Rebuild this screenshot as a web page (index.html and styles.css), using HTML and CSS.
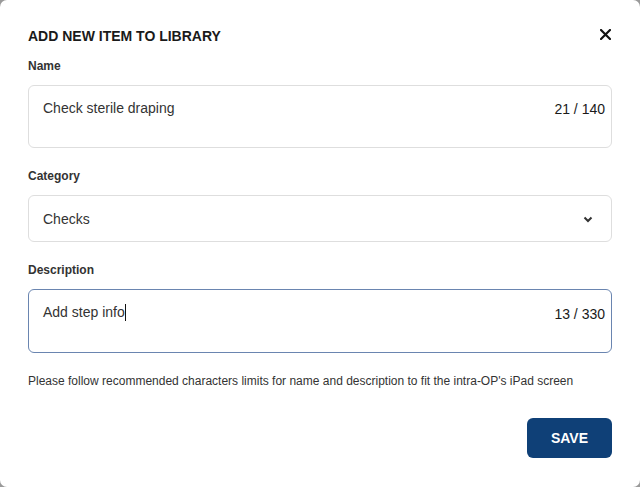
FILE: index.html
```html
<html lang="en">

<head>
    <meta charset="UTF-8">
    <meta name="viewport" content="width=device-width, initial-scale=1.0">
    <title>Add New Item To Library</title>
    <link rel="stylesheet" href="styles.css">
</head>

<body>
    <div class="modal">
        <div class="modal-header">
            <h1>ADD NEW ITEM TO LIBRARY</h1>
            <button class="close-btn" title="Close">
                <svg width="11" height="11" viewBox="0 0 11 11">
                    <path d="M1 1 L10 10 M10 1 L1 10" stroke="#111" stroke-width="2.2" stroke-linecap="round" />
                </svg>
            </button>
        </div>

        <!-- Name -->
        <div class="field">
            <label>Name</label>
            <div class="text-box name-box">
                <span class="value">Check sterile draping</span>
                <span class="counter">21 / 140</span>
            </div>
        </div>

        <!-- Category -->
        <div class="field">
            <label>Category</label>
            <div class="text-box select-box">
                <span class="value">Checks</span>
                <svg class="chevron" width="10" height="7" viewBox="0 0 10 7">
                    <path d="M1.5 1.5 L5 5 L8.5 1.5" fill="none" stroke="#333" stroke-width="2" />
                </svg>
            </div>
        </div>

        <!-- Description -->
        <div class="field">
            <label>Description</label>
            <div class="text-box desc-box focused">
                <span class="value">Add step info<span class="caret"></span></span>
                <span class="counter">13 / 330</span>
            </div>
        </div>

        <p class="hint">Please follow recommended characters limits for name and description to fit the intra-OP's iPad screen</p>

        <div class="actions">
            <button class="save-btn">SAVE</button>
        </div>
    </div>
</body>

</html>
```

FILE: styles.css
```css
body {
    margin: 0;
    background: #9a9a9a;
    font-family: "Liberation Sans", Arial, sans-serif;
    color: #222;
}

.modal {
    width: 640px;
    height: 487px;
    box-sizing: border-box;
    background: #fff;
    border-radius: 7px;
    padding: 28px 28px 0 28px;
}

.modal-header {
    display: flex;
    justify-content: space-between;
    align-items: center;
    margin-bottom: 15px;
}

.modal-header h1 {
    margin: 0;
    font-size: 14px;
    font-weight: 700;
    color: #1a1a1a;
    line-height: 16px;
}

.close-btn {
    background: none;
    border: none;
    padding: 0;
    margin: -3px 1px 0 0;
    display: flex;
    cursor: pointer;
}

.field {
    margin-bottom: 21px;
}

label {
    display: block;
    font-size: 12px;
    font-weight: 700;
    color: #333;
    line-height: 14px;
    margin-bottom: 12px;
}

.text-box {
    display: flex;
    justify-content: space-between;
    align-items: flex-start;
    border: 1px solid #dedede;
    border-radius: 6px;
    box-sizing: border-box;
    font-size: 14px;
    line-height: 16px;
    color: #333;
}

.name-box {
    height: 63px;
    padding: 14px 6px 0 14px;
}

.name-box .counter {
    padding-top: 1px;
}

.select-box {
    height: 47px;
    align-items: center;
    padding: 0 18px 0 14px;
}

.desc-box {
    height: 64px;
    padding: 14px 6px 0 14px;
}

.desc-box .counter {
    padding-top: 2px;
}

.focused {
    border-color: #6a85b0;
}

.counter {
    font-size: 14px;
    color: #1a1a1a;
}

.caret {
    display: inline-block;
    width: 1px;
    height: 17px;
    background: #111;
    vertical-align: -4px;
}

.chevron {
    margin-top: 2px;
}

.hint {
    margin: 1px 0 0 0;
    font-size: 12px;
    line-height: 14px;
    color: #333;
}

.actions {
    display: flex;
    justify-content: flex-end;
    margin-top: 30px;
}

.save-btn {
    background: #0f4077;
    color: #fff;
    border: none;
    border-radius: 6px;
    width: 85px;
    height: 40px;
    font-family: inherit;
    font-size: 14px;
    font-weight: 700;
    cursor: pointer;
}
```
